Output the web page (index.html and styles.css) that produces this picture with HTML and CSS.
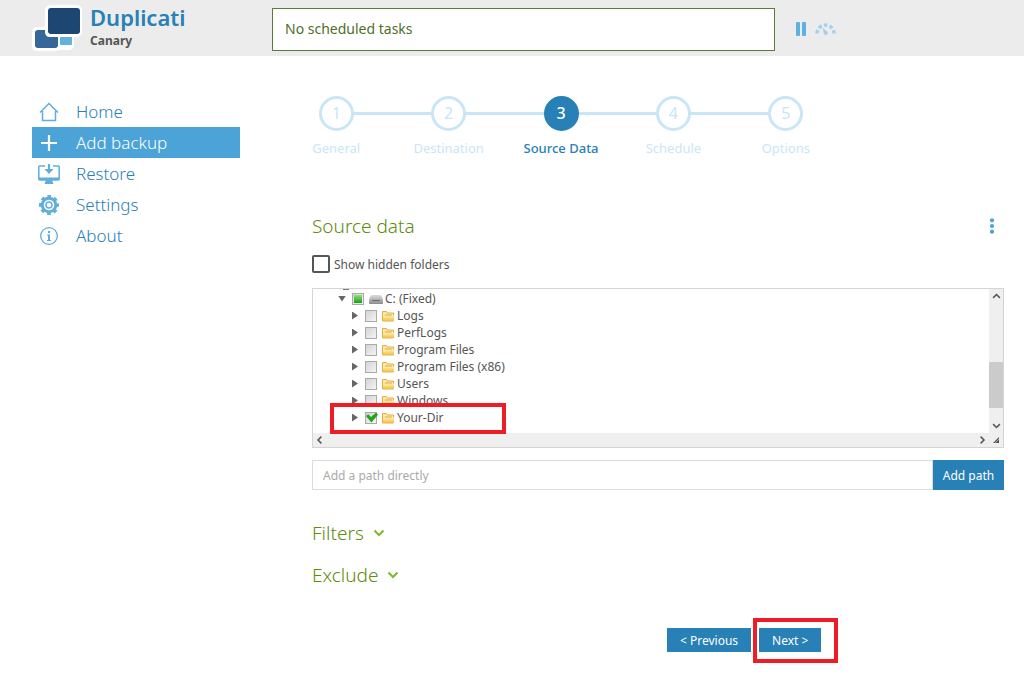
FILE: index.html
```html
<!DOCTYPE html>
<html lang="en">
<head>
    <meta charset="UTF-8">
    <meta name="viewport" content="width=device-width, initial-scale=1.0">
    <title>Duplicati</title>
    <link rel="stylesheet" href="styles.css">
</head>
<body>
    <!-- shared icons -->
    <svg class="defs" width="0" height="0" aria-hidden="true">
        <defs>
            <linearGradient id="folder-fill" x1="0" y1="0" x2="0" y2="1">
                <stop offset="0" stop-color="#fdf0b4"/>
                <stop offset="1" stop-color="#f2bd3f"/>
            </linearGradient>
            <linearGradient id="drive-fill" x1="0" y1="0" x2="0" y2="1">
                <stop offset="0" stop-color="#dcdcdc"/>
                <stop offset="1" stop-color="#8c8c8c"/>
            </linearGradient>
        </defs>
        <symbol id="folder" viewBox="0 0 12 12">
            <path d="M.5 11V1.500h4l1 1.500h6V11z" fill="#fbe8a6" stroke="#e3ae48"/>
            <path d="M1 11V7.500h3l1.500-2H12V11z" fill="url(#folder-fill)"/>
            <path d="M3 5h7" stroke="#e0a93f"/>
        </symbol>
        <symbol id="drive" viewBox="0 0 14 12">
            <path d="M3 2h8q1 0 1.500 1L14 7v3q0 1-1 1H1q-1 0-1-1V7l1.500-4Q2 2 3 2z" fill="url(#drive-fill)"/>
            <path d="M3 7.500h8" stroke="#6d6d6d"/>
        </symbol>
        <symbol id="computer" viewBox="0 0 14 16">
            <path d="M1 2h12v9H1z" fill="#8fb4d6" stroke="#777"/>
            <path d="M4 15h6" stroke="#777" stroke-width="2"/>
        </symbol>
        <symbol id="chevron" viewBox="0 0 12 8">
            <path d="M1.500 1.500 6 6l4.500-4.500" fill="none" stroke="currentColor" stroke-width="2"/>
        </symbol>
    </svg>

    <header class="header">
        <a class="brand" href="#">
            <svg class="logo" viewBox="0 0 50 48" aria-hidden="true">
                <g fill="#fff">
                    <rect x="22" y="22" width="20" height="24" rx="5"/>
                    <rect x="0" y="23" width="29" height="24" rx="5"/>
                    <rect x="13" y="1" width="37" height="32" rx="5"/>
                </g>
                <rect x="28" y="29" width="12" height="12" rx="1" fill="#63b1de"/>
                <rect x="3" y="26" width="23" height="18" rx="3" fill="#356799"/>
                <path d="M13 25h14v8h-9q-5 0-5-5z" fill="#fff"/>
                <path d="M26 30h14v3H26z" fill="#fff"/>
                <rect x="16" y="4" width="32" height="26" rx="3" fill="#1d4673"/>
            </svg>
            <span class="brand-text">
                <strong class="brand-name">Duplicati</strong>
                <span class="brand-channel">Canary</span>
            </span>
        </a>
        <div class="status">No scheduled tasks</div>
        <div class="controls">
            <button type="button" aria-label="Pause">
                <svg width="10" height="14" viewBox="0 0 10 14"><rect width="4" height="14" rx="1" fill="#5fb0df"/><rect x="6" width="4" height="14" rx="1" fill="#5fb0df"/></svg>
            </button>
            <button type="button" aria-label="Throttle">
                <svg width="21" height="14" viewBox="0 0 21 14">
                    <path d="M2 11.500A8.500 8.500 0 0 1 19 11.500" fill="none" stroke="#a4d0ea" stroke-width="3.500" stroke-dasharray="3.500 2.300"/>
                    <path d="M7.500 5.500l4.300 3.800a2 2 0 1 1-3 2z" fill="#a4d0ea"/>
                </svg>
            </button>
        </div>
    </header>

    <div class="container">
        <nav class="menu">
            <a href="#">
                <svg viewBox="0 0 22 22"><path d="M2 11.500 11 2.500l9 9M4.500 10v9.500h13V10" fill="none" stroke="currentColor" stroke-width="1.500"/></svg>
                Home
            </a>
            <a href="#" class="active">
                <svg viewBox="0 0 22 22"><path d="M11 3v16M3 11h16" stroke="currentColor" stroke-width="2.200"/></svg>
                Add backup
            </a>
            <a href="#">
                <svg viewBox="0 0 22 22"><path d="M7 3H1.500Q.8 3 .8 4v12q0 1 1 1h18.400q1 0 1-1V4q0-1-.7-1H15" fill="none" stroke="currentColor" stroke-width="1.500"/><path d="M8 17h6l1.500 4h-9zM1 14.500h20V17H1zM10 1h2v5h3.500L11 11 6.500 6H10z" fill="currentColor"/></svg>
                Restore
            </a>
            <a href="#">
                <svg viewBox="0 0 22 22"><circle cx="11" cy="11" r="6.800" fill="none" stroke="currentColor" stroke-width="3"/><circle cx="11" cy="11" r="8.800" fill="none" stroke="currentColor" stroke-width="2.400" stroke-dasharray="3.800 3.110" stroke-dashoffset="1.900"/><circle cx="11" cy="11" r="3" fill="none" stroke="currentColor" stroke-width="1.400"/></svg>
                Settings
            </a>
            <a href="#">
                <svg viewBox="0 0 22 22"><circle cx="11" cy="11" r="8.300" fill="none" stroke="currentColor" stroke-width="1.300"/><path d="M10 6h2v2h-2zM9 9.500h3V15h1v1H9v-1h1v-4.500H9z" fill="currentColor"/></svg>
                About
            </a>
        </nav>

        <main class="content">
            <ol class="steps">
                <li><span class="num">1</span>General</li>
                <li><span class="num">2</span>Destination</li>
                <li class="current"><span class="num">3</span>Source Data</li>
                <li><span class="num">4</span>Schedule</li>
                <li><span class="num">5</span>Options</li>
            </ol>

            <div class="title-row">
                <h2>Source data</h2>
                <button type="button" class="more" aria-label="More">
                    <svg width="6" height="16" viewBox="0 0 6 16" fill="#4ba3d7"><circle cx="3" cy="2.300" r="2.100"/><circle cx="3" cy="8" r="2.100"/><circle cx="3" cy="13.700" r="2.100"/></svg>
                </button>
            </div>

            <label class="hidden-folders"><input type="checkbox"> Show hidden folders</label>

            <div class="tree">
                <div class="tree-view">
                    <ul>
                        <li class="root"><span class="arrow open"></span><svg class="icon"><use href="#computer"/></svg></li>
                        <li class="drive"><span class="arrow open"></span><input type="checkbox" class="partial" aria-label="C: (Fixed)"><svg class="icon"><use href="#drive"/></svg>C: (Fixed)</li>
                        <li><span class="arrow"></span><input type="checkbox" aria-label="Logs"><svg class="icon"><use href="#folder"/></svg>Logs</li>
                        <li><span class="arrow"></span><input type="checkbox" aria-label="PerfLogs"><svg class="icon"><use href="#folder"/></svg>PerfLogs</li>
                        <li><span class="arrow"></span><input type="checkbox" aria-label="Program Files"><svg class="icon"><use href="#folder"/></svg>Program Files</li>
                        <li><span class="arrow"></span><input type="checkbox" aria-label="Program Files (x86)"><svg class="icon"><use href="#folder"/></svg>Program Files (x86)</li>
                        <li><span class="arrow"></span><input type="checkbox" aria-label="Users"><svg class="icon"><use href="#folder"/></svg>Users</li>
                        <li><span class="arrow"></span><input type="checkbox" aria-label="Windows"><svg class="icon"><use href="#folder"/></svg>Windows</li>
                        <li><span class="arrow"></span><input type="checkbox" aria-label="Your-Dir" checked><svg class="icon"><use href="#folder"/></svg>Your-Dir</li>
                    </ul>
                </div>
                <div class="vbar">
                    <svg class="up"><use href="#chevron"/></svg>
                    <div class="thumb"></div>
                    <svg><use href="#chevron"/></svg>
                </div>
                <div class="hbar">
                    <svg class="left"><use href="#chevron"/></svg>
                    <svg class="right"><use href="#chevron"/></svg>
                </div>
                <div class="grip"></div>
                <div class="mark mark-row"></div>
            </div>

            <form class="path">
                <input type="text" placeholder="Add a path directly" aria-label="Add a path directly">
                <button type="button">Add path</button>
            </form>

            <h2 class="fold"><a href="#">Filters <svg><use href="#chevron"/></svg></a></h2>
            <h2 class="fold"><a href="#">Exclude <svg><use href="#chevron"/></svg></a></h2>

            <div class="buttons">
                <button type="button">&lt; Previous</button>
                <div class="next">
                    <button type="button">Next &gt;</button>
                    <div class="mark mark-next"></div>
                </div>
            </div>
        </main>
    </div>
</body>
</html>
```

FILE: styles.css
```css
* {
    box-sizing: border-box;
}
body {
    margin: 0;
    background: #fff;
    color: #555;
    font-family: "Noto Sans", "Open Sans", sans-serif;
    font-size: 12px;
}
a {
    text-decoration: none;
}
button {
    border: none;
    font-family: inherit;
    cursor: pointer;
}
.defs {
    position: absolute;
}

/* header */
.header {
    display: flex;
    align-items: flex-start;
    height: 56px;
    padding-left: 32px;
    background: #ececec;
}
.brand {
    display: flex;
    gap: 8px;
    width: 240px;
    padding-top: 4px;
}
.logo {
    width: 50px;
    height: 48px;
}
.brand-text {
    display: flex;
    flex-direction: column;
}
.brand-name {
    color: #2780b6;
    font-size: 22px;
    font-weight: 600;
    line-height: 27px;
}
.brand-channel {
    color: #555;
    font-weight: bold;
    line-height: 20px;
}
.status {
    width: 503px;
    height: 43px;
    margin-top: 8px;
    padding: 0 12px;
    border: 1px solid #5c7a38;
    background: #fff;
    color: #4f6f2b;
    font-size: 14px;
    line-height: 40px;
}
.controls {
    display: flex;
    align-items: center;
    gap: 9px;
    height: 58px;
    margin-left: 21px;
}
.controls button {
    display: flex;
    padding: 0;
    background: none;
}

/* layout */
.container {
    display: flex;
    gap: 72px;
    padding: 40px 20px 16px 32px;
}
.menu {
    flex: none;
    width: 208px;
}
.menu a {
    display: flex;
    align-items: center;
    gap: 16px;
    height: 31px;
    padding-left: 6px;
    color: #2780b6;
    font-size: 17px;
    font-weight: 300;
}
.menu svg {
    width: 22px;
    height: 22px;
    color: #5eaede;
}
.menu .active,
.menu .active svg {
    color: #fff;
}
.menu .active {
    background: #4ba3d7;
}
.content {
    flex: 1;
}

/* wizard steps */
.steps {
    display: flex;
    width: 562px;
    margin: 0 0 0 -32px;
    padding: 0;
    list-style: none;
}
.steps li {
    position: relative;
    display: flex;
    flex: 1;
    flex-direction: column;
    align-items: center;
    gap: 7px;
    color: #c9e6f7;
    font-size: 13px;
    line-height: 20px;
}
.steps li + li::before {
    content: "";
    position: absolute;
    top: 16px;
    right: 50%;
    z-index: -1;
    width: 100%;
    height: 3px;
    background: #c9e6f7;
}
.num {
    width: 35px;
    height: 35px;
    border: 3px solid #c9e6f7;
    border-radius: 50%;
    background: #fff;
    font-size: 16px;
    line-height: 29px;
    text-align: center;
}
.steps .current {
    color: #2780b6;
    font-weight: 500;
}
.current .num {
    border-color: #2780b6;
    background: #2780b6;
    color: #fff;
}

/* source data */
h2 {
    margin: 0;
    color: #5f8c0c;
    font-size: 19px;
    font-weight: 300;
    line-height: 28px;
}
.title-row {
    display: flex;
    align-items: center;
    justify-content: space-between;
    margin-top: 54px;
}
.more {
    display: flex;
    padding: 0;
    margin-right: 9px;
    background: none;
}
.hidden-folders {
    display: flex;
    align-items: center;
    gap: 4px;
    height: 18px;
    margin: 15px 0;
}
.hidden-folders input {
    appearance: none;
    width: 18px;
    height: 18px;
    margin: 0;
    border: 2px solid #555;
    border-radius: 2px;
}
.tree {
    position: relative;
    display: grid;
    grid-template-columns: 1fr 14px;
    grid-template-rows: 144px 14px;
    border: 1px solid #d4d4d4;
}
.tree-view {
    overflow: hidden;
}
.tree ul {
    margin: -16px 0 0;
    padding: 0;
    list-style: none;
}
.tree li {
    display: flex;
    align-items: center;
    height: 17px;
    padding-left: 39px;
    white-space: nowrap;
}
.tree .drive {
    padding-left: 25px;
}
.tree .root {
    padding-left: 12px;
}
.arrow {
    width: 6px;
    height: 8px;
    margin-right: 7px;
    background: #666;
    clip-path: polygon(0 0, 100% 50%, 0 100%);
}
.arrow.open {
    width: 8px;
    height: 6px;
    margin-right: 6px;
    clip-path: polygon(0 0, 100% 0, 50% 100%);
}
.tree input {
    appearance: none;
    display: grid;
    place-items: center;
    width: 12px;
    height: 12px;
    margin: 0 5px 0 0;
    border: 1px solid #aaa;
    background: linear-gradient(135deg, #d4d4d4, #f4f4f4);
}
.tree .partial::before {
    content: "";
    width: 8px;
    height: 8px;
    background: linear-gradient(#8fe07e, #13a30c);
}
.tree input:checked::before {
    content: "";
    width: 12px;
    height: 10px;
    background: #23a51b;
    clip-path: polygon(0 35%, 18% 18%, 42% 45%, 84% 0, 100% 22%, 45% 100%);
}
.icon {
    width: 12px;
    height: 12px;
    margin-right: 3px;
}
.drive .icon {
    width: 14px;
    margin-right: 2px;
}
.root .icon {
    width: 14px;
    height: 16px;
}
.vbar,
.hbar,
.grip {
    background: #efefef;
}
.vbar {
    display: flex;
    flex-direction: column;
    align-items: center;
    justify-content: space-between;
    padding: 4px 0;
}
.vbar svg,
.hbar svg {
    width: 9px;
    height: 6px;
    color: #555;
}
.up {
    transform: rotate(180deg);
}
.thumb {
    width: 14px;
    height: 46px;
    margin-top: 48px;
    background: #cbcbcb;
}
.hbar {
    display: flex;
    align-items: center;
    justify-content: space-between;
    padding: 0 2px;
}
.left {
    transform: rotate(90deg);
}
.right {
    transform: rotate(-90deg);
}
.grip::before {
    content: "";
    display: block;
    width: 6px;
    height: 6px;
    margin: 4px;
    background: repeating-linear-gradient(135deg, #555 0 2px, #aaa 2px 3px);
    clip-path: polygon(100% 0, 100% 100%, 0 100%);
}

/* red highlight frames */
.mark {
    position: absolute;
    border: 4px solid #ee1c24;
    pointer-events: none;
}
.mark-row {
    top: 114px;
    left: 17px;
    width: 176px;
    height: 31px;
}
.mark-next {
    top: -10px;
    left: -6px;
    width: 85px;
    height: 45px;
}

.path {
    display: flex;
    height: 30px;
    margin: 12px 0 29px;
}
.path input {
    flex: 1;
    padding: 0 10px;
    border: 1px solid #dcdcdc;
    font-family: inherit;
    font-size: 12px;
}
.path input::placeholder {
    color: #aaa;
}
.path button,
.buttons button {
    background: #2780b6;
    color: #fff;
    font-size: 12px;
}
.path button {
    width: 71px;
    padding: 0;
}
.fold {
    margin-bottom: 14px;
}
.fold a {
    display: flex;
    align-items: center;
    gap: 9px;
    color: inherit;
}
.fold svg {
    width: 12px;
    height: 8px;
    color: #7db928;
}
.buttons {
    display: flex;
    gap: 8px;
    margin: 39px 0 0 355px;
}
.buttons button {
    display: block;
    height: 24px;
    padding: 0 13px;
}
.next {
    position: relative;
}
```
